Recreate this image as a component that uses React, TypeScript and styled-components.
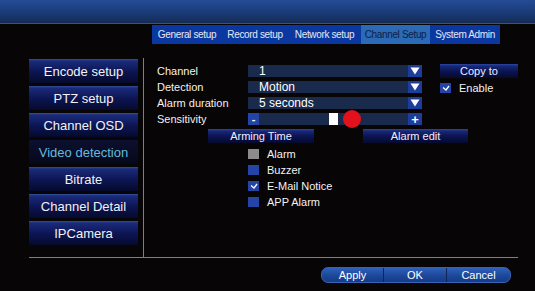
import React from 'react';
import styled, { createGlobalStyle } from 'styled-components';

const GlobalStyle = createGlobalStyle`
  html, body {
    margin: 0;
    padding: 0;
    background: #070505;
  }
  body {
    font-family: "Liberation Sans", Arial, sans-serif;
  }
`;

const tabs = ['General setup', 'Record setup', 'Network setup', 'Channel Setup', 'System Admin'];
const tabWidths = [70, 66, 73, 69, 70];
const menu = ['Encode setup', 'PTZ setup', 'Channel OSD', 'Video detection', 'Bitrate', 'Channel Detail', 'IPCamera'];
const selects = [
  { label: 'Channel', value: '1' },
  { label: 'Detection', value: 'Motion' },
  { label: 'Alarm duration', value: '5 seconds' },
];
const alarms = [
  { label: 'Alarm', state: 'off' },
  { label: 'Buzzer', state: 'idle' },
  { label: 'E-Mail Notice', state: 'on' },
  { label: 'APP Alarm', state: 'idle' },
];

const Check = () => (
  <svg width="8" height="6" viewBox="0 0 8 6">
    <path d="M1 2.5 L4 5 L7 1" stroke="#fff" strokeWidth="1.3" fill="none" />
  </svg>
);

const Arrow = () => (
  <svg width="10" height="8" viewBox="0 0 10 8">
    <path d="M0.5 0.5 H9.5 L5 7.5 Z" fill="#fff" />
  </svg>
);

export default function App() {
  return (
    <Screen>
      <GlobalStyle />
      <TopBar />
      <TabBar>
        {tabs.map((t, i) => (
          <Tab key={t} $active={i === 3} $w={tabWidths[i]}>
            {t}
          </Tab>
        ))}
      </TabBar>
      <Body>
        <Sidebar>
          {menu.map((m) => (
            <MenuButton key={m} $active={m === 'Video detection'}>
              {m}
            </MenuButton>
          ))}
        </Sidebar>
        <Content>
          <TopForm>
            <Fields>
              {selects.map((s) => (
                <Row key={s.label}>
                  <Label>{s.label}</Label>
                  <Select>
                    <SelectValue>{s.value}</SelectValue>
                    <EndBox>
                      <Arrow />
                    </EndBox>
                  </Select>
                </Row>
              ))}
              <Row>
                <Label>Sensitivity</Label>
                <Slider>
                  <StartBox>-</StartBox>
                  <Track>
                    <Thumb />
                    <Dot />
                  </Track>
                  <EndBox>+</EndBox>
                </Slider>
              </Row>
            </Fields>
            <Side>
              <SmallButton $w={78}>Copy to</SmallButton>
              <CheckRow>
                <Box $state="on">
                  <Check />
                </Box>
                <CheckLabel>Enable</CheckLabel>
              </CheckRow>
            </Side>
          </TopForm>
          <ActionRow>
            <SmallButton $w={106}>Arming Time</SmallButton>
            <SmallButton $w={105}>Alarm edit</SmallButton>
          </ActionRow>
          <AlarmList>
            {alarms.map((a) => (
              <CheckRow key={a.label}>
                <Box $state={a.state}>{a.state === 'on' && <Check />}</Box>
                <CheckLabel>{a.label}</CheckLabel>
              </CheckRow>
            ))}
          </AlarmList>
        </Content>
      </Body>
      <Footer>
        <Pill>
          <PillButton $w={61}>Apply</PillButton>
          <PillButton $w={62}>OK</PillButton>
          <PillButton $w={63}>Cancel</PillButton>
        </Pill>
      </Footer>
    </Screen>
  );
}

const Screen = styled.div`
  width: 535px;
  height: 291px;
  background: #070505;
  overflow: hidden;
  position: relative;
`;

const TopBar = styled.div`
  height: 23px;
  background: linear-gradient(#244b95, #1a3a74 60%, #152b55);
  border-bottom: 1px solid #33596a;
`;

const TabBar = styled.div`
  display: flex;
  margin: 1px 0 0 152px;
  width: 348px;
  height: 19px;
  background: #0a38a0;
`;

const Tab = styled.div<{ $active: boolean; $w: number }>`
  width: ${({ $w }) => $w}px;
  display: flex;
  align-items: center;
  justify-content: center;
  font-size: 10px;
  letter-spacing: -0.35px;
  color: ${({ $active }) => ($active ? '#0f2048' : '#e4e8f4')};
  background: ${({ $active }) => ($active ? '#2a6ab6' : 'transparent')};
`;

const Body = styled.div`
  display: flex;
  margin: 14px 0 0 29px;
  width: 489px;
  height: 199px;
  border-bottom: 1px solid #4a9696;
`;

const Sidebar = styled.div`
  width: 109px;
  padding: 1px 5px 0 0;
  border-right: 1px solid #4a9696;
  display: flex;
  flex-direction: column;
  gap: 3px;
`;

const MenuButton = styled.div<{ $active: boolean }>`
  height: 24px;
  display: flex;
  align-items: center;
  justify-content: center;
  font-size: 13px;
  color: ${({ $active }) => ($active ? '#62bcdf' : '#f2f2f2')};
  background: ${({ $active }) =>
    $active
      ? 'linear-gradient(#0c1030, #06081a)'
      : 'linear-gradient(#34509e 0, #1b2b7a 2px, #0d1656 50%, #050a2c 100%)'};
`;

const Content = styled.div`
  flex: 1;
  padding: 6px 0 0 13px;
  display: flex;
  flex-direction: column;
`;

const TopForm = styled.div`
  display: flex;
`;

const Fields = styled.div`
  width: 265px;
  display: flex;
  flex-direction: column;
  gap: 4px;
  padding-top: 1px;
`;

const Row = styled.div`
  display: flex;
  align-items: center;
  height: 12px;
`;

const Label = styled.div`
  width: 91px;
  font-size: 11px;
  color: #f2f2f2;
  white-space: nowrap;
`;

const Select = styled.div`
  width: 174px;
  height: 12px;
  display: flex;
  background: #1a2a4c;
`;

const SelectValue = styled.div`
  flex: 1;
  padding-left: 11px;
  font-size: 12px;
  line-height: 12px;
  color: #fff;
`;

const EndBox = styled.div`
  width: 14px;
  height: 12px;
  background: #1c3d9c;
  color: #fff;
  display: flex;
  align-items: center;
  justify-content: center;
  font-size: 13px;
  font-weight: bold;
`;

const StartBox = styled(EndBox)`
  width: 11px;
  background: #2443a6;
  font-size: 11px;
`;

const Slider = styled.div`
  width: 174px;
  height: 12px;
  display: flex;
`;

const Track = styled.div`
  flex: 1;
  position: relative;
  background: #1a2a4c;
`;

const Thumb = styled.div`
  position: absolute;
  left: 70px;
  top: 0;
  width: 9px;
  height: 12px;
  background: #fff;
`;

const Dot = styled.div`
  position: absolute;
  left: 84px;
  top: -3px;
  width: 18px;
  height: 18px;
  border-radius: 50%;
  background: #e2121c;
`;

const Side = styled.div`
  margin-left: 18px;
  display: flex;
  flex-direction: column;
  gap: 5px;
`;

const SmallButton = styled.div<{ $w: number }>`
  width: ${({ $w }) => $w}px;
  height: 14px;
  display: flex;
  align-items: center;
  justify-content: center;
  font-size: 11px;
  color: #eef;
  background: linear-gradient(#2c48a0 0, #18287a 2px, #0c1454 50%, #050a2c 100%);
`;

const CheckRow = styled.div`
  display: flex;
  align-items: center;
  height: 10px;
`;

const Box = styled.div<{ $state: string }>`
  width: 11px;
  height: 10px;
  display: flex;
  align-items: center;
  justify-content: center;
  background: ${({ $state }) => ($state === 'off' ? '#8c8c8c' : '#2444a6')};
`;

const CheckLabel = styled.div`
  margin-left: 8px;
  font-size: 11px;
  color: #f2f2f2;
`;

const ActionRow = styled.div`
  display: flex;
  gap: 49px;
  margin: 4px 0 0 51px;
`;

const AlarmList = styled.div`
  display: flex;
  flex-direction: column;
  gap: 6px;
  margin: 6px 0 0 91px;
`;

const Footer = styled.div`
  display: flex;
  justify-content: flex-end;
  padding: 9px 24px 0 0;
`;

const Pill = styled.div`
  display: flex;
  height: 14px;
  border-radius: 7px;
  overflow: hidden;
  border: 1px solid #3a62b4;
  background: linear-gradient(#3060bc, #1a4696 60%, #153c86);
`;

const PillButton = styled.div<{ $w: number }>`
  width: ${({ $w }) => $w}px;
  display: flex;
  align-items: center;
  justify-content: center;
  font-size: 11px;
  color: #fff;
  & + & {
    border-left: 1px solid #0c2658;
  }
`;
